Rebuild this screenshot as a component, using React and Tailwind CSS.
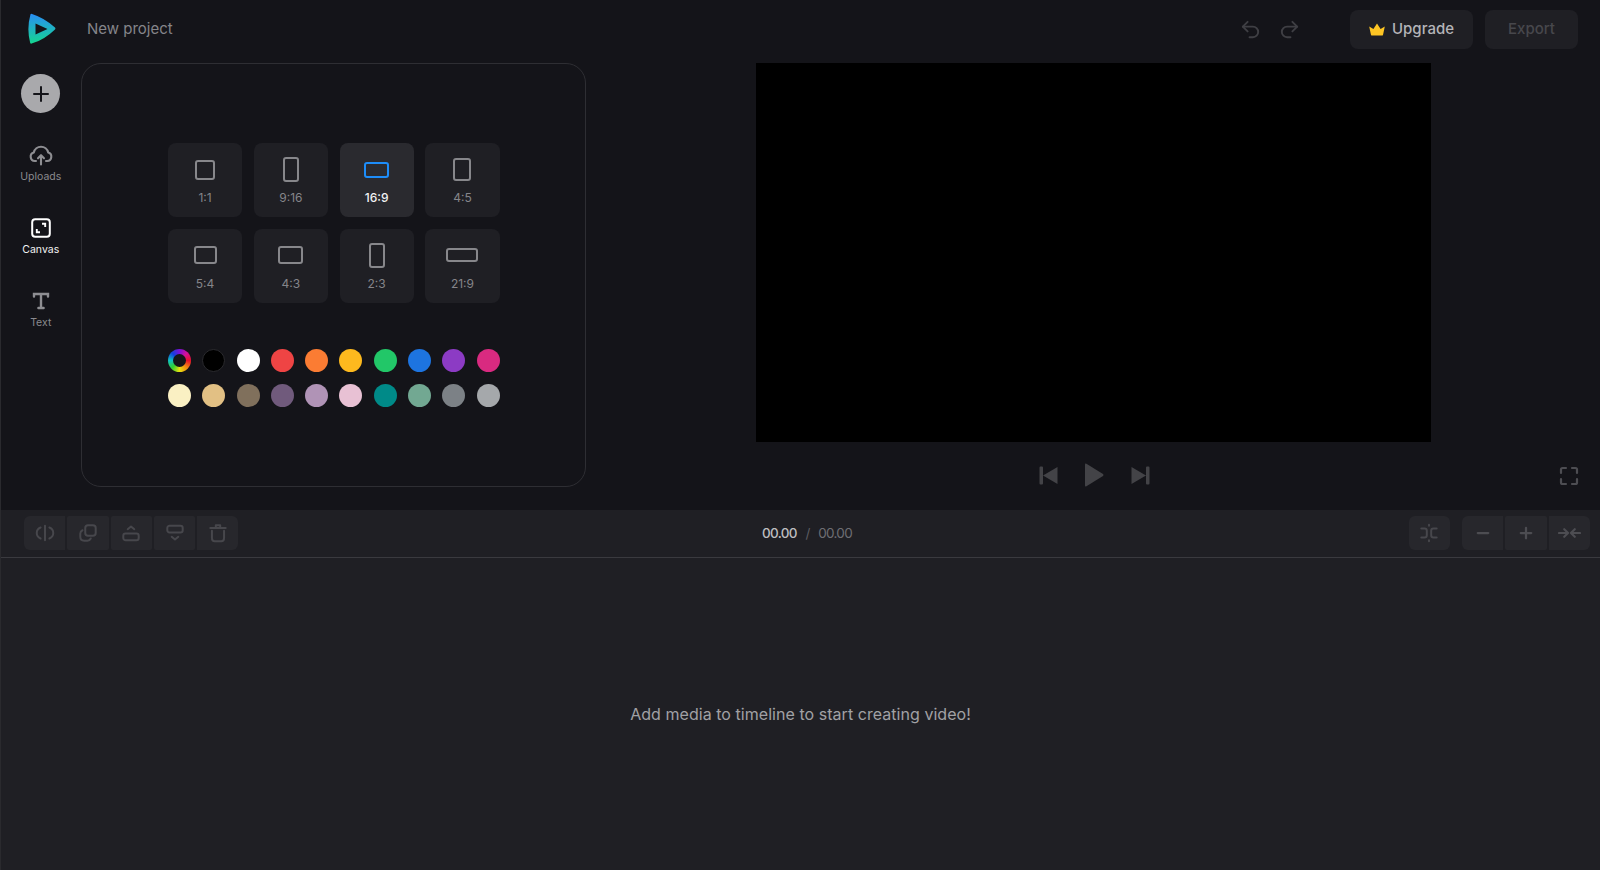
import { Undo2, Redo2, Plus, Minus } from "lucide-react";

const ratios = [
  { label: "1:1", box: "w-[20px] h-[20px]" },
  { label: "9:16", box: "w-[16px] h-[25px]" },
  { label: "16:9", box: "w-[25px] h-[16px]", active: true },
  { label: "4:5", box: "w-[18px] h-[23px]" },
  { label: "5:4", box: "w-[23px] h-[18px]" },
  { label: "4:3", box: "w-[25px] h-[18px]" },
  { label: "2:3", box: "w-[16px] h-[25px]" },
  { label: "21:9", box: "w-[32px] h-[14px]" },
];

const swatches = [
  "bg-[#000000] border border-[#2a2a2e]",
  "bg-[#ffffff]",
  "bg-[#ef4444]",
  "bg-[#fb7c33]",
  "bg-[#fdb91e]",
  "bg-[#22c768]",
  "bg-[#1d74e0]",
  "bg-[#8c3bc4]",
  "bg-[#d92a80]",
  "bg-[#faf0c3]",
  "bg-[#e2c084]",
  "bg-[#80705c]",
  "bg-[#705a7c]",
  "bg-[#b093b6]",
  "bg-[#e8c1d4]",
  "bg-[#008a88]",
  "bg-[#72a892]",
  "bg-[#7c8186]",
  "bg-[#a5a8ab]",
];

function Logo() {
  return (
    <svg width="30" height="32" viewBox="0 0 30 32">
      <defs>
        <linearGradient id="logoFill" x1="0.4" y1="0" x2="0.4" y2="1">
          <stop offset="0" stopColor="#2a8df5" />
          <stop offset="1" stopColor="#14d68f" />
        </linearGradient>
      </defs>
      <path
        fill="url(#logoFill)"
        fillRule="evenodd"
        d="M3.500 1.200 Q4 0.400 5 0.900 Q18 5 28 14.600 Q28.800 15.600 28 16.400 Q17 27 4.600 30.600 Q3.600 30.900 3.200 30 Q-0.600 16 3.500 1.200 Z M8.500 10.500 L8.500 21.500 L20.500 16 Z"
      />
    </svg>
  );
}

function Crown() {
  return (
    <svg width="16" height="13" viewBox="0 0 16 13" fill="#fdc524">
      <path d="M1.900 11.400 L0.200 3.600 L4.400 6 L8 0.600 L11.600 6 L15.800 3.600 L14.100 11.400 Q13.900 12.600 12.800 12.600 L3.200 12.600 Q2.100 12.600 1.900 11.400 Z" />
    </svg>
  );
}

function UploadIcon() {
  return (
    <svg width="24" height="22" viewBox="0 0 24 22" fill="none" stroke="#8e8e92" strokeWidth="2.100" strokeLinecap="round" strokeLinejoin="round">
      <path d="M7 17H5.800A4.400 4.400 0 0 1 4.800 8.400A7.400 7.400 0 0 1 19.200 8.400A4.400 4.400 0 0 1 18.200 17H17" />
      <path d="M12 20.500V11.500M9 14.300 12 11.200l3 3.100" />
    </svg>
  );
}

function CanvasIcon() {
  return (
    <svg width="20" height="20" viewBox="0 0 20 20" fill="none" stroke="#fff" strokeWidth="2">
      <rect x="1.200" y="1.200" width="17.600" height="17.600" rx="3" />
      <path d="M11 5.800h3.200V9M9 14.200H5.800V11" strokeWidth="1.900" />
    </svg>
  );
}

function TextIcon() {
  return (
    <svg width="18" height="18" viewBox="0 0 18 18" fill="none" stroke="#8e8e92" strokeWidth="2.400" strokeLinecap="round">
      <path d="M2 4.600V2h14v2.600M9 2v14M6.400 16h5.200" />
    </svg>
  );
}

function SideItem({ icon, label, active }) {
  return (
    <div className="flex h-[73px] flex-col items-center pt-[3px]">
      <div className="flex h-[24px] items-center justify-center">{icon}</div>
      <span className={`mt-[2.5px] text-[10.5px] leading-[14px] ${active ? "text-[#f2f2f3]" : "text-[#8a8a8e]"}`}>
        {label}
      </span>
    </div>
  );
}

function Glyph({ children }) {
  return (
    <svg width="22" height="22" viewBox="0 0 20 20" fill="none" stroke="#47474c" strokeWidth="1.800" strokeLinecap="round" strokeLinejoin="round">
      {children}
    </svg>
  );
}

function ToolButton({ className = "", children }) {
  return (
    <div className={`flex h-[34px] w-[41.3px] items-center justify-center bg-[#27272c] ${className}`}>
      {children}
    </div>
  );
}

export default function App() {
  return (
    <div className="flex h-screen w-full flex-col overflow-hidden border-l border-[#2a2a2e] bg-[#1f1f24] font-['Inter',sans-serif]">
      <div className="h-[510px] bg-[#141419]">
        <header className="flex h-[58px] items-center">
          <div className="ml-[26px] flex w-[60px]">
            <Logo />
          </div>
          <span className="text-[15px] text-[#85858a]">New project</span>
          <div className="ml-auto flex items-center gap-[16px] text-[#3f3f44]">
            <Undo2 size={23} strokeWidth={2} />
            <Redo2 size={23} strokeWidth={2} />
          </div>
          <button className="ml-[49px] flex h-[39px] w-[123px] items-center justify-center gap-[7px] rounded-[8px] bg-[#1f1f24] text-[15px] font-medium text-[#b4b4b8]">
            <Crown />
            Upgrade
          </button>
          <button className="ml-[12px] mr-[22px] h-[39px] w-[93px] rounded-[8px] bg-[#1f1f24] text-[15px] font-medium text-[#47474c]">
            Export
          </button>
        </header>

        <div className="flex">
          <aside className="flex w-[80px] flex-col items-center pr-[0.5px]">
            <div className="mt-[16px] mb-[27px] flex h-[39px] w-[39px] items-center justify-center rounded-full bg-[#a9a9ac] text-[#141419]">
              <Plus size={24} strokeWidth={2} />
            </div>
            <SideItem icon={<UploadIcon />} label="Uploads" />
            <SideItem icon={<CanvasIcon />} label="Canvas" active />
            <SideItem icon={<TextIcon />} label="Text" />
          </aside>

          <section className="mt-[5px] h-[424px] w-[505px] rounded-[20px] border border-[#2e2e33] pt-[79px] pl-[86px]">
            <div className="grid w-[331.5px] grid-cols-4 gap-[11.7px]">
              {ratios.map((r) => (
                <div
                  key={r.label}
                  className={`flex h-[74px] flex-col items-center rounded-[8px] ${r.active ? "bg-[#2a2a2f]" : "bg-[#1f1f24]"}`}
                >
                  <div className="mt-[14px] flex h-[25px] items-center justify-center">
                    <div className={`${r.box} rounded-[3px] border-2 ${r.active ? "border-[#1d8cf8]" : "border-[#87878b]"}`} />
                  </div>
                  <span className={`mt-[8px] text-[12px] leading-[16px] ${r.active ? "font-medium text-[#f2f2f3]" : "text-[#85858a]"}`}>
                    {r.label}
                  </span>
                </div>
              ))}
            </div>

            <div className="mt-[46.5px] grid w-[343px] grid-cols-10 gap-y-[11.5px]">
              <div className="flex h-[23px] w-[23px] items-center justify-center rounded-full bg-[conic-gradient(#7a10d8,#d4109a,#e8102c,#f08a10,#e8e010,#30d030,#10c0c0,#1040e0,#7a10d8)]">
                <div className="h-[13px] w-[13px] rounded-full bg-[#141419]" />
              </div>
              {swatches.map((c) => (
                <div key={c} className={`h-[23px] w-[23px] rounded-full ${c}`} />
              ))}
            </div>
          </section>

          <main className="flex flex-1 flex-col items-center">
            <div className="mt-[5px] h-[379px] w-[675px] bg-black" />
            <div className="relative mt-[21px] flex w-full items-center justify-center pl-[3px]">
              <svg width="19" height="19" viewBox="0 0 19 19" fill="#434347">
                <path d="M0.500 1.500 Q0.500 0.500 1.500 0.500 L3 0.500 Q4 0.500 4 1.500 L4 17.500 Q4 18.500 3 18.500 L1.500 18.500 Q0.500 18.500 0.500 17.500 Z M18.500 1 L18.500 18 L4 9.500 Z" />
              </svg>
              <svg className="mr-[27px] ml-[25.500px]" width="20" height="24" viewBox="0 0 20 24" fill="#434347">
                <path d="M1 1.500 Q1 0 2.400 0.700 L19 11 Q20 12 19 13 L2.400 23.300 Q1 24 1 22.500 Z" />
              </svg>
              <svg width="19" height="19" viewBox="0 0 19 19" fill="#434347">
                <path d="M18.500 1.500 Q18.500 0.500 17.500 0.500 L16 0.500 Q15 0.500 15 1.500 L15 17.500 Q15 18.500 16 18.500 L17.500 18.500 Q18.500 18.500 18.500 17.500 Z M0.500 1 L0.500 18 L15 9.500 Z" />
              </svg>
              <svg className="absolute top-[3px] right-[21px]" width="20" height="20" viewBox="0 0 20 20" fill="none" stroke="#4d4d52" strokeWidth="2.200" strokeLinecap="round">
                <path d="M2 7V3.500Q2 2 3.500 2H7M13 2h3.500Q18 2 18 3.500V7M18 13v3.500q0 1.500-1.500 1.500H13M7 18H3.500Q2 18 2 16.500V13" />
              </svg>
            </div>
          </main>
        </div>
      </div>

      <div className="flex h-[48px] items-center border-b border-[#3a3a3f] pr-[10px] pb-[1px] pl-[23px]">
        <div className="flex gap-[2px]">
          <ToolButton className="rounded-l-[6px]">
            <Glyph>
              <path d="M10 3.500v13M6 5Q2.500 6.500 2.500 10T6 15M14 5q3.500 1.500 3.500 5T14 15" />
            </Glyph>
          </ToolButton>
          <ToolButton className="rounded-[2px]">
            <Glyph>
              <rect x="7.500" y="3" width="9.500" height="9.500" rx="2.500" />
              <path d="M5 7.500Q3 8.500 3 10.500v3Q3 17 6.500 17h3q2 0 3-2" />
            </Glyph>
          </ToolButton>
          <ToolButton className="rounded-[2px]">
            <Glyph>
              <path d="M7 6.500 10 4l3 2.500" />
              <rect x="3" y="10.500" width="14" height="6" rx="2" />
            </Glyph>
          </ToolButton>
          <ToolButton className="rounded-[2px]">
            <Glyph>
              <rect x="3" y="3.500" width="14" height="6" rx="2" />
              <path d="M7 13.500 10 16l3-2.500" />
            </Glyph>
          </ToolButton>
          <ToolButton className="rounded-r-[6px]">
            <Glyph>
              <path d="M3 5.500h14M8 5.500V3h4v2.500M4.500 8v6.500Q4.500 17.500 7 17.500h6q2.500 0 2.500-3V8" />
            </Glyph>
          </ToolButton>
        </div>

        <div className="ml-[523.5px] flex w-[90px] items-center justify-between text-[13.5px] tracking-[-0.7px]">
          <span className="font-medium text-[#bdbdc0]">00.00</span>
          <span className="text-[#5c5c61]">/</span>
          <span className="text-[#6e6e73]">00.00</span>
        </div>

        <div className="ml-auto flex items-center">
          <ToolButton className="rounded-[6px]">
            <Glyph>
              <path d="M3 6h3q2 0 2 2v4q0 2-2 2H3M17 6h-3q-2 0-2 2v4q0 2 2 2h3M10 2.500v1M10 16.500v1" />
            </Glyph>
          </ToolButton>
          <div className="ml-[12px] flex gap-[2px]">
            <ToolButton className="rounded-l-[6px]">
              <Minus size={18} strokeWidth={3} className="text-[#4d4d52]" />
            </ToolButton>
            <ToolButton className="rounded-[2px]">
              <Plus size={18} strokeWidth={3} className="text-[#4d4d52]" />
            </ToolButton>
            <ToolButton className="rounded-r-[6px]">
              <svg width="23" height="14" viewBox="0 0 24 14" fill="none" stroke="#4d4d52" strokeWidth="2.200" strokeLinecap="round" strokeLinejoin="round">
                <path d="M1 7h9M6.500 3 10.500 7l-4 4M23 7h-9M17.500 3 13.500 7l4 4" />
              </svg>
            </ToolButton>
          </div>
        </div>
      </div>

      <div className="flex flex-1 items-center justify-center text-[16px] tracking-[0.045px] text-[#a1a1a5]">
        Add media to timeline to start creating video!
      </div>
    </div>
  );
}
